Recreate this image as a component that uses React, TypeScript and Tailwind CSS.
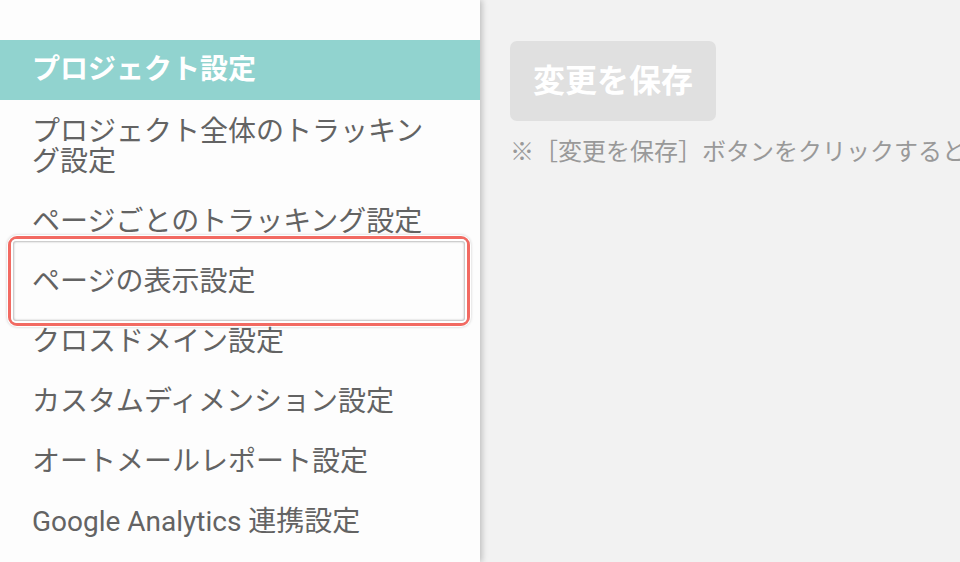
const items = [
  "プロジェクト全体のトラッキング設定",
  "ページごとのトラッキング設定",
  "ページの表示設定",
  "クロスドメイン設定",
  "カスタムディメンション設定",
  "オートメールレポート設定",
  "Google Analytics 連携設定",
];

export default function App() {
  return (
    <div
      className="flex w-[960px] h-[562px] overflow-hidden bg-[#f2f2f2]"
      style={{ fontFamily: "Roboto, 'Noto Sans CJK JP', sans-serif" }}
    >
      <div className="relative z-10 w-[480px] shrink-0 bg-[#fdfdfd] pt-10 shadow-[2px_0_6px_rgba(0,0,0,0.22)]">
        <div className="h-[60px] bg-[#91d3cf] px-8 text-[28px] leading-[60px] font-bold text-white">
          プロジェクト設定
        </div>
        {items.map((label) => (
          <div
            key={label}
            className="relative px-8 pt-[17px] pb-[13px] text-[28px] leading-[30px] text-[#636363]"
          >
            {label}
            {label === "ページの表示設定" && (
              <div className="absolute -top-[14px] left-2 w-[462px] h-[90px] rounded-[9px] border-[3px] border-[#f26a62] shadow-[0_0_0_1px_#ffffff,0_0_3px_1px_rgba(0,0,0,0.2)]">
                <div className="w-full h-full rounded-[5px] shadow-[inset_0_0_0_2px_#ffffff,inset_0_0_2px_3px_rgba(0,0,0,0.25)]" />
              </div>
            )}
          </div>
        ))}
      </div>
      <div className="flex-1 pl-[30px] pt-[41px] whitespace-nowrap">
        <div className="inline-flex h-20 items-center rounded-[7px] bg-[#e0e0e0] px-[23px] text-[32px] font-bold text-white">
          変更を保存
        </div>
        <p className="mt-4 text-[24px] leading-[30px] text-[#999999]">
          ※［変更を保存］ボタンをクリックすると、設定が反映されます。
        </p>
      </div>
    </div>
  );
}
